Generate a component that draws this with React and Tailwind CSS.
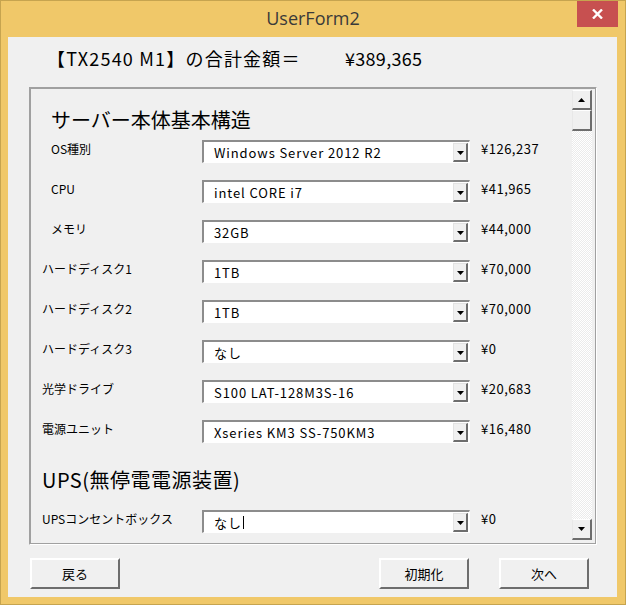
import React from "react";

const rows = [
  { label: "OS種別", indent: true, value: "Windows Server 2012 R2", price: "¥126,237" },
  { label: "CPU", indent: true, value: "intel CORE i7", price: "¥41,965" },
  { label: "メモリ", indent: true, value: "32GB", price: "¥44,000" },
  { label: "ハードディスク1", value: "1TB", price: "¥70,000" },
  { label: "ハードディスク2", value: "1TB", price: "¥70,000" },
  { label: "ハードディスク3", value: "なし", price: "¥0" },
  { label: "光学ドライブ", value: "S100 LAT-128M3S-16", price: "¥20,683" },
  { label: "電源ユニット", value: "Xseries KM3 SS-750KM3", price: "¥16,480" },
];

function DownTri() {
  return (
    <svg width="7" height="4" viewBox="0 0 7 4" className="block">
      <path d="M0 0H7L3.5 4Z" fill="#000" />
    </svg>
  );
}

function UpTri() {
  return (
    <svg width="7" height="4" viewBox="0 0 7 4" className="block">
      <path d="M0 4H7L3.5 0Z" fill="#000" />
    </svg>
  );
}

function Combo({ value, caret }) {
  return (
    <div className="w-[268px] h-[23px] flex border-t-2 border-l-2 border-r border-b border-t-[#8c8c8c] border-l-[#8c8c8c] border-r-white border-b-white bg-white">
      <div className="flex-1 flex items-center pl-[10px] pt-[2px] text-[13px] tracking-[0.9px] leading-none text-black whitespace-nowrap">
        {value}
        {caret && <span className="inline-block w-px h-[13px] bg-black ml-[1px]" />}
      </div>
      <div className="w-[15px] mt-[1px] mr-[1px] flex items-center justify-center pt-[3px] bg-[#f0f0f0] border-t border-l border-t-[#e3e3e3] border-l-[#e3e3e3] border-r-2 border-b-2 border-r-[#6d6d6d] border-b-[#6d6d6d]">
        <DownTri />
      </div>
    </div>
  );
}

function Row({ label, indent, value, price, caret, className = "" }) {
  return (
    <div className={"h-[40px] flex items-center " + className}>
      <div className={"w-[160px] mb-[5px] text-[12px] leading-none text-black whitespace-nowrap " + (indent ? "pl-[9px]" : "")}>
        {label}
      </div>
      <Combo value={value} caret={caret} />
      <div className="ml-[11px] mb-[5px] text-[13px] tracking-[0.5px] leading-none text-black whitespace-nowrap">{price}</div>
    </div>
  );
}

function WinButton({ children }) {
  return (
    <div className="w-[90px] h-[31px] flex items-center justify-center bg-[#f0f0f0] border-t-2 border-l-2 border-r-2 border-b-2 border-t-white border-l-white border-r-[#6d6d6d] border-b-[#6d6d6d] text-[13px] text-black">
      {children}
    </div>
  );
}

function ScrollBtn({ children, h }) {
  return (
    <div className={"w-[20px] flex items-center justify-center bg-[#f0f0f0] border-t border-l border-t-white border-l-[#e8e8e8] border-r-2 border-b-2 border-r-[#6d6d6d] border-b-[#6d6d6d] " + h}>
      {children}
    </div>
  );
}

export default function App() {
  return (
    <div className="w-[626px] h-[605px] bg-[#F0C869] border border-[#C6A44F] flex flex-col font-['Noto_Sans_CJK_JP',sans-serif] overflow-hidden">
      {/* Title bar */}
      <div className="relative h-[36px] flex items-center justify-center shrink-0">
        <span className="font-['Open_Sans',sans-serif] text-[18px] text-[#3a3a3a] pb-[2px]">UserForm2</span>
        <div className="absolute top-0 right-[7px] w-[41px] h-[26px] bg-[#C75050] flex items-center justify-center">
          <svg width="11" height="10" viewBox="0 0 11 10">
            <path d="M1 0.5L10 9.5M10 0.5L1 9.5" stroke="#fff" strokeWidth="2.4" />
          </svg>
        </div>
      </div>

      {/* Client area */}
      <div className="ml-[7px] mr-[8px] h-[560px] bg-[#F0F0F0] flex flex-col shrink-0">
        <div className="pt-[9px] h-[33px] flex items-center pl-[39px] text-[18px] leading-[24px] text-black whitespace-nowrap">
          <span className="w-[298px] shrink-0 tracking-[1.2px]">【TX2540 M1】の合計金額＝</span>
          <span className="tracking-[0.3px]">¥389,365</span>
        </div>

        {/* Frame */}
        <div className="mt-[17px] ml-[21px] w-[568px] h-[458px] border border-t-[#a0a0a0] border-l-[#a0a0a0] border-r-white border-b-white">
          <div className="w-full h-full border border-[#a0a0a0] flex">
            <div className="flex-1 overflow-hidden pl-[11px]">
              <div className="pt-[19px] h-[42px] pl-[9px] text-[20px] leading-[23px] text-black whitespace-nowrap">
                サーバー本体基本構造
              </div>
              {rows.map((r) => (
                <Row key={r.label} {...r} />
              ))}
              <div className="mt-[17px] h-[24px] text-[20px] leading-[24px] tracking-[0.5px] text-black whitespace-nowrap">
                UPS(無停電電源装置)
              </div>
              <Row className="mt-[9px]" label="UPSコンセントボックス" value="なし" price="¥0" caret />
            </div>
            <div className="w-[20px] mt-[1px] mb-[3px] mr-[3px] flex flex-col">
              <ScrollBtn h="h-[20px]">
                <UpTri />
              </ScrollBtn>
              <ScrollBtn h="h-[21px]" />
              <div className="flex-1 bg-[image:repeating-conic-gradient(#ffffff_0%_25%,#ebebeb_0%_50%)] bg-[length:2px_2px]" />
              <ScrollBtn h="h-[21px]">
                <DownTri />
              </ScrollBtn>
            </div>
          </div>
        </div>

        {/* Buttons */}
        <div className="mt-[13px] flex pl-[22px]">
          <WinButton>戻る</WinButton>
          <div className="ml-[259px]">
            <WinButton>初期化</WinButton>
          </div>
          <div className="ml-[30px]">
            <WinButton>次へ</WinButton>
          </div>
        </div>
      </div>
    </div>
  );
}
